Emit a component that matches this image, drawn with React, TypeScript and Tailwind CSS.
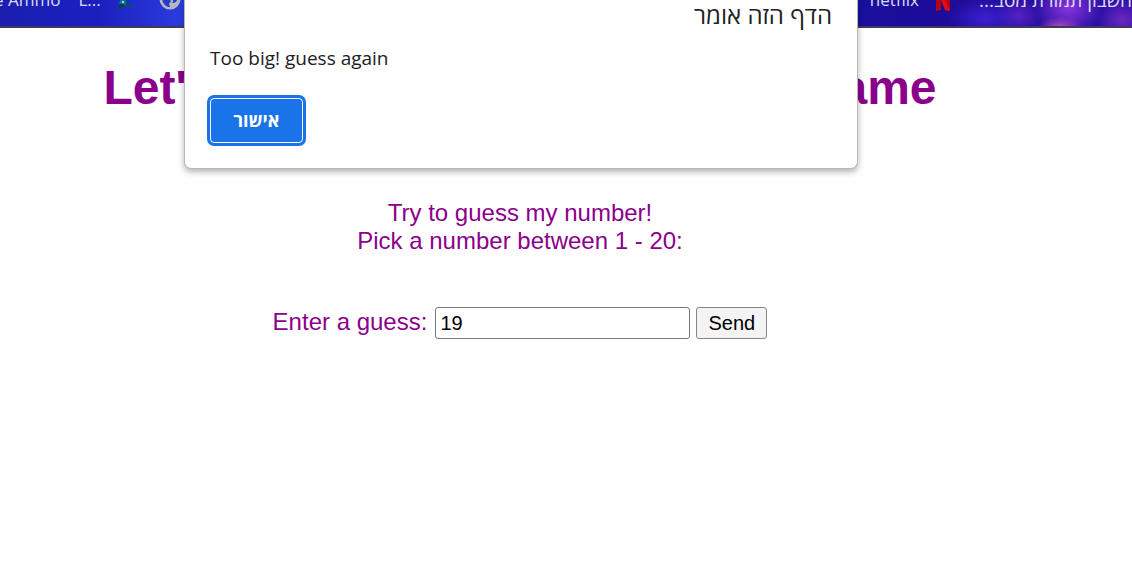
import { useState } from "react";

const UI_FONT = "font-['Open_Sans','Noto_Sans','DejaVu_Sans',sans-serif]";

function BookmarksBar() {
  return (
    <nav
      aria-label="Bookmarks"
      className={`flex h-7 justify-between overflow-hidden border-b-2 border-[#3f3a5c] bg-[radial-gradient(ellipse_34px_26px_at_1068px_8px,#8a35dc,transparent),radial-gradient(ellipse_22px_9px_at_1060px_26px,#b04fb0,transparent),radial-gradient(ellipse_36px_20px_at_985px_18px,#3a20d0,transparent),radial-gradient(ellipse_24px_18px_at_1018px_16px,#5a22c4,transparent),radial-gradient(ellipse_24px_20px_at_1122px_20px,#6a28c0,transparent),linear-gradient(90deg,#1a1fb0_0px,#1c1fc0_100px,#2d3fe0_190px,#1a0f9c_860px,#1c0c98_940px,#3010a8_1132px)] text-[17px] leading-6 text-[#dcdcf0] ${UI_FONT}`}
    >
      <div className="-mt-3 flex h-6 gap-[18px]">
        <a href="#ammo" className="-ml-1.5 whitespace-nowrap">e Ammo</a>
        <a href="#l">L...</a>
        <svg viewBox="0 0 20 22" className="-ml-1 h-[22px] w-5 shrink-0" aria-hidden="true">
          <path d="M7 0l4 13 8 7-8-2-9 4 3-9z" fill="#0d6f92" />
          <path d="M8 16l3 2-9 4 2-6z" fill="#0b3d60" />
          <path d="M11 12l8 8-8-2z" fill="#0a4a6c" />
          <circle cx="8" cy="14" r="1" fill="#d8f4ff" />
        </svg>
        <svg viewBox="0 0 22 22" className="ml-1.5 h-[22px] w-[22px] shrink-0" aria-hidden="true">
          <circle cx="11" cy="11" r="10.500" fill="#b4b8bc" />
          <path d="M3 9c0 6 3 10 8 10l-1-3 2-3-4-4zM13 15c4 0 5-2 6-5l-1-4-6 4c2 1 3 3 1 5z" fill="#2c38cc" />
        </svg>
      </div>
      <div className="-mt-3 flex h-6">
        <a href="#netflix" className="mr-4">netflix</a>
        <svg viewBox="0 0 16 24" className="mr-7 h-6 w-4 shrink-0" aria-hidden="true">
          <path d="M1 0h5v22l-5 1zM10 0h5v23l-5-1z" fill="#b1060f" />
          <path d="M1 0h5l9 23-5-1z" fill="#e50914" />
        </svg>
        <a href="#calc" dir="rtl" className="text-[19px] whitespace-nowrap">חשבון תמורת מסב...</a>
      </div>
    </nav>
  );
}

function AlertDialog({ onClose }: { onClose: () => void }) {
  return (
    <div
      role="alertdialog"
      aria-labelledby="alert-title"
      aria-describedby="alert-text"
      className={`mx-auto w-[674px] rounded-b-[7px] border border-t-0 border-[#b8b8b8] bg-white px-[25px] pb-[25px] text-[#202124] shadow-[0_3px_6px_rgba(0,0,0,0.3)] ${UI_FONT}`}
    >
      <h2 id="alert-title" dir="rtl" className="text-[24px] leading-[30px]">
        הדף הזה אומר
      </h2>
      <p id="alert-text" className="pt-3.5 text-[19px] leading-7">
        Too big! guess again
      </p>
      <button
        type="button"
        onClick={onClose}
        className="mt-[26px] block h-[45px] w-[93px] rounded-[4px] border border-white bg-[#1a73e8] text-[18px] font-bold text-white ring-3 ring-[#1a73e8]"
      >
        אישור
      </button>
    </div>
  );
}

export default function App() {
  const [guess, setGuess] = useState("19");
  const [open, setOpen] = useState(true);

  return (
    <div className="min-h-screen bg-white">
      <BookmarksBar />
      <div className="pr-[92px]">
        <main className="text-center font-['Liberation_Sans',Arial,sans-serif] text-[24px] leading-7 text-[#8b008b]">
          <h1 className="pt-[33px] text-[48px] leading-[54px] font-bold">
            Let's play a Number Guessing Game
          </h1>
          <p className="pt-[84px]">
            Try to guess my number!
            <br />
            Pick a number between 1 - 20:
          </p>
          <form
            className="flex items-center justify-center pt-[52px]"
            onSubmit={(e) => e.preventDefault()}
          >
            <label htmlFor="guess" className="mr-2 pb-0.5">Enter a guess:</label>
            <input
              id="guess"
              value={guess}
              onChange={(e) => setGuess(e.target.value)}
              className="mr-1.5 h-8 w-[255px] rounded-[3px] border border-[#767676] bg-white px-1 text-[20px] text-black"
            />
            <button
              type="submit"
              className="h-8 w-[71px] rounded-[3px] border border-[#858585] bg-[#f4f4f4] text-[20px] text-black"
            >
              Send
            </button>
          </form>
        </main>
      </div>
      {open && (
        <div className="absolute inset-x-0 top-0 mr-[90px]">
          <AlertDialog onClose={() => setOpen(false)} />
        </div>
      )}
    </div>
  );
}
